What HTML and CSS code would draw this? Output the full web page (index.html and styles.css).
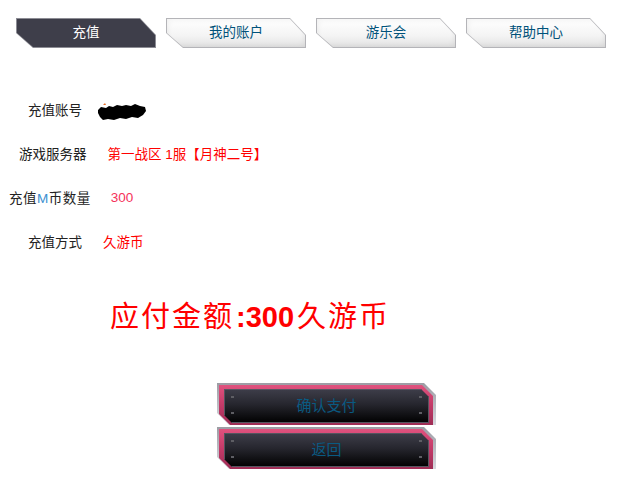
FILE: index.html
```html
<!DOCTYPE html>
<html lang="zh-CN">
  <head>
    <meta charset="UTF-8" />
    <title>充值</title>
    <link rel="stylesheet" href="styles.css">
  </head>
  <body>
    <nav class="tabs">
      <a class="tab active" href="#"><span class="tab-face">充值</span></a>
      <a class="tab" href="#"><span class="tab-face">我的账户</span></a>
      <a class="tab" href="#"><span class="tab-face">游乐会</span></a>
      <a class="tab" href="#"><span class="tab-face">帮助中心</span></a>
    </nav>

    <div class="form">
      <div class="row row-account">
        <span class="label">充值账号</span>
        <span class="value">
          <svg class="blot" width="50" height="18" viewBox="0 0 50 18">
            <path d="M1 7 L4 4 L9 5 L12 3 L16 4 L20 2 L25 3 L29 2 L34 3 L38 1 L43 3 L48 4 L49 8 L46 12 L41 15 L35 14 L29 16 L23 15 L17 17 L11 16 L6 17 L3 14 L1 10 Z" fill="#000"/>
            <path d="M6 2 L8 0 L9 2 Z" fill="#e8702a"/>
          </svg>
        </span>
      </div>
      <div class="row row-server">
        <span class="label">游戏服务器</span>
        <span class="value red">第一战区 1服【月神二号】</span>
      </div>
      <div class="row row-amount">
        <span class="label">充值<em>M</em>币数量</span>
        <span class="value pink">300</span>
      </div>
      <div class="row row-method">
        <span class="label">充值方式</span>
        <span class="value red">久游币</span>
      </div>
    </div>

    <div class="total">应付金额<b>:300</b>久游币</div>

    <div class="actions">
      <button class="btn"><span class="btn-frame"><span class="btn-inner">
        <span class="rivets"><i></i><i></i></span>
        <span class="btn-text">确认支付</span>
        <span class="rivets"><i></i><i></i></span>
      </span></span></button>
      <button class="btn"><span class="btn-frame"><span class="btn-inner">
        <span class="rivets"><i></i><i></i></span>
        <span class="btn-text">返回</span>
        <span class="rivets"><i></i><i></i></span>
      </span></span></button>
    </div>
  </body>
</html>
```

FILE: styles.css
```css
body {
  margin: 0;
  font-family: "Liberation Sans", "Noto Sans CJK SC", sans-serif;
  background-color: #fff;
  color: #222;
}

.tabs {
  display: flex;
  gap: 10px;
  padding: 18px 0 0 16px;
}

.tab {
  display: block;
  width: 140px;
  height: 30px;
  background-color: #b4b4b8;
  text-decoration: none;
  clip-path: polygon(0 0, 124px 0, 100% 17px, 100% 100%, 17px 100%, 0 15px);
}

.tab-face {
  display: block;
  margin: 1px;
  height: 28px;
  line-height: 27px;
  text-align: center;
  font-size: 13.5px;
  color: #00527a;
  background: linear-gradient(#ffffff, #f4f4f4 60%, #e2e2e2);
  box-shadow: inset 0 0 6px rgba(0, 0, 0, 0.08);
  clip-path: polygon(0 0, 123px 0, 100% 16px, 100% 100%, 16px 100%, 0 14px);
}

.tab.active {
  background-color: #8c8c94;
}

.tab.active .tab-face {
  background: #3e3e4a;
  color: #fff;
  box-shadow: none;
}

.form {
  margin-top: 39px;
  font-size: 13.5px;
}

.row {
  display: flex;
  align-items: center;
  height: 44px;
}

.label em {
  font-style: normal;
  color: #3a8fd0;
}

.value {
  display: flex;
  align-items: center;
}

.blot {
  margin-top: 5px;
}

.red {
  color: #f00;
}

.pink {
  color: #f5325a;
}

.row-account .label { margin-left: 28px; }
.row-account .value { margin-left: 15px; }
.row-server .label { margin-left: 19px; }
.row-server .value { margin-left: 21px; }
.row-amount .label { margin-left: 9px; letter-spacing: 0.5px; }
.row-amount .value { margin-left: 20px; }
.row-method .label { margin-left: 28px; }
.row-method .value { margin-left: 21px; }

.total {
  margin-top: 34px;
  padding-left: 110px;
  height: 40px;
  line-height: 40px;
  font-size: 29px;
  letter-spacing: 2px;
  color: #f00;
}

.total b {
  font-weight: bold;
  letter-spacing: 0;
  margin: 0 3px 0 2px;
}

.actions {
  margin-top: 46px;
  padding-left: 217px;
  display: flex;
  flex-direction: column;
  gap: 2px;
}

.btn {
  display: block;
  width: 219px;
  height: 42px;
  padding: 2px 3px 0 2px;
  border: none;
  background: linear-gradient(#9c9ca4, #d8d8de);
  cursor: pointer;
  font-family: inherit;
  clip-path: polygon(0 0, calc(100% - 12px) 0, 100% 12px, 100% 100%, 12px 100%, 0 calc(100% - 12px));
}

.btn-frame {
  display: block;
  height: 100%;
  padding: 4px 4px 2px 5px;
  box-sizing: border-box;
  background: linear-gradient(#e0527e, #c33a68 50%, #9e2d55);
  clip-path: polygon(0 0, calc(100% - 11px) 0, 100% 11px, 100% 100%, 11px 100%, 0 calc(100% - 11px));
}

.btn-inner {
  display: flex;
  align-items: stretch;
  height: 100%;
  box-sizing: border-box;
  padding: 0 7px;
  background: linear-gradient(#3e3e4a, #26262e 45%, #000);
  box-shadow: inset 0 0 0 1px #55555f;
  clip-path: polygon(0 0, calc(100% - 8px) 0, 100% 8px, 100% 100%, 8px 100%, 0 calc(100% - 8px));
}

.rivets {
  display: flex;
  flex-direction: column;
  justify-content: space-between;
  padding: 7px 0 9px;
}

.rivets i {
  display: block;
  width: 3px;
  height: 2px;
  background-color: #5e5e64;
}

.btn-text {
  flex: 1;
  display: flex;
  align-items: center;
  justify-content: center;
  padding-bottom: 4px;
  font-size: 15px;
  color: #0a5a82;
}
```
